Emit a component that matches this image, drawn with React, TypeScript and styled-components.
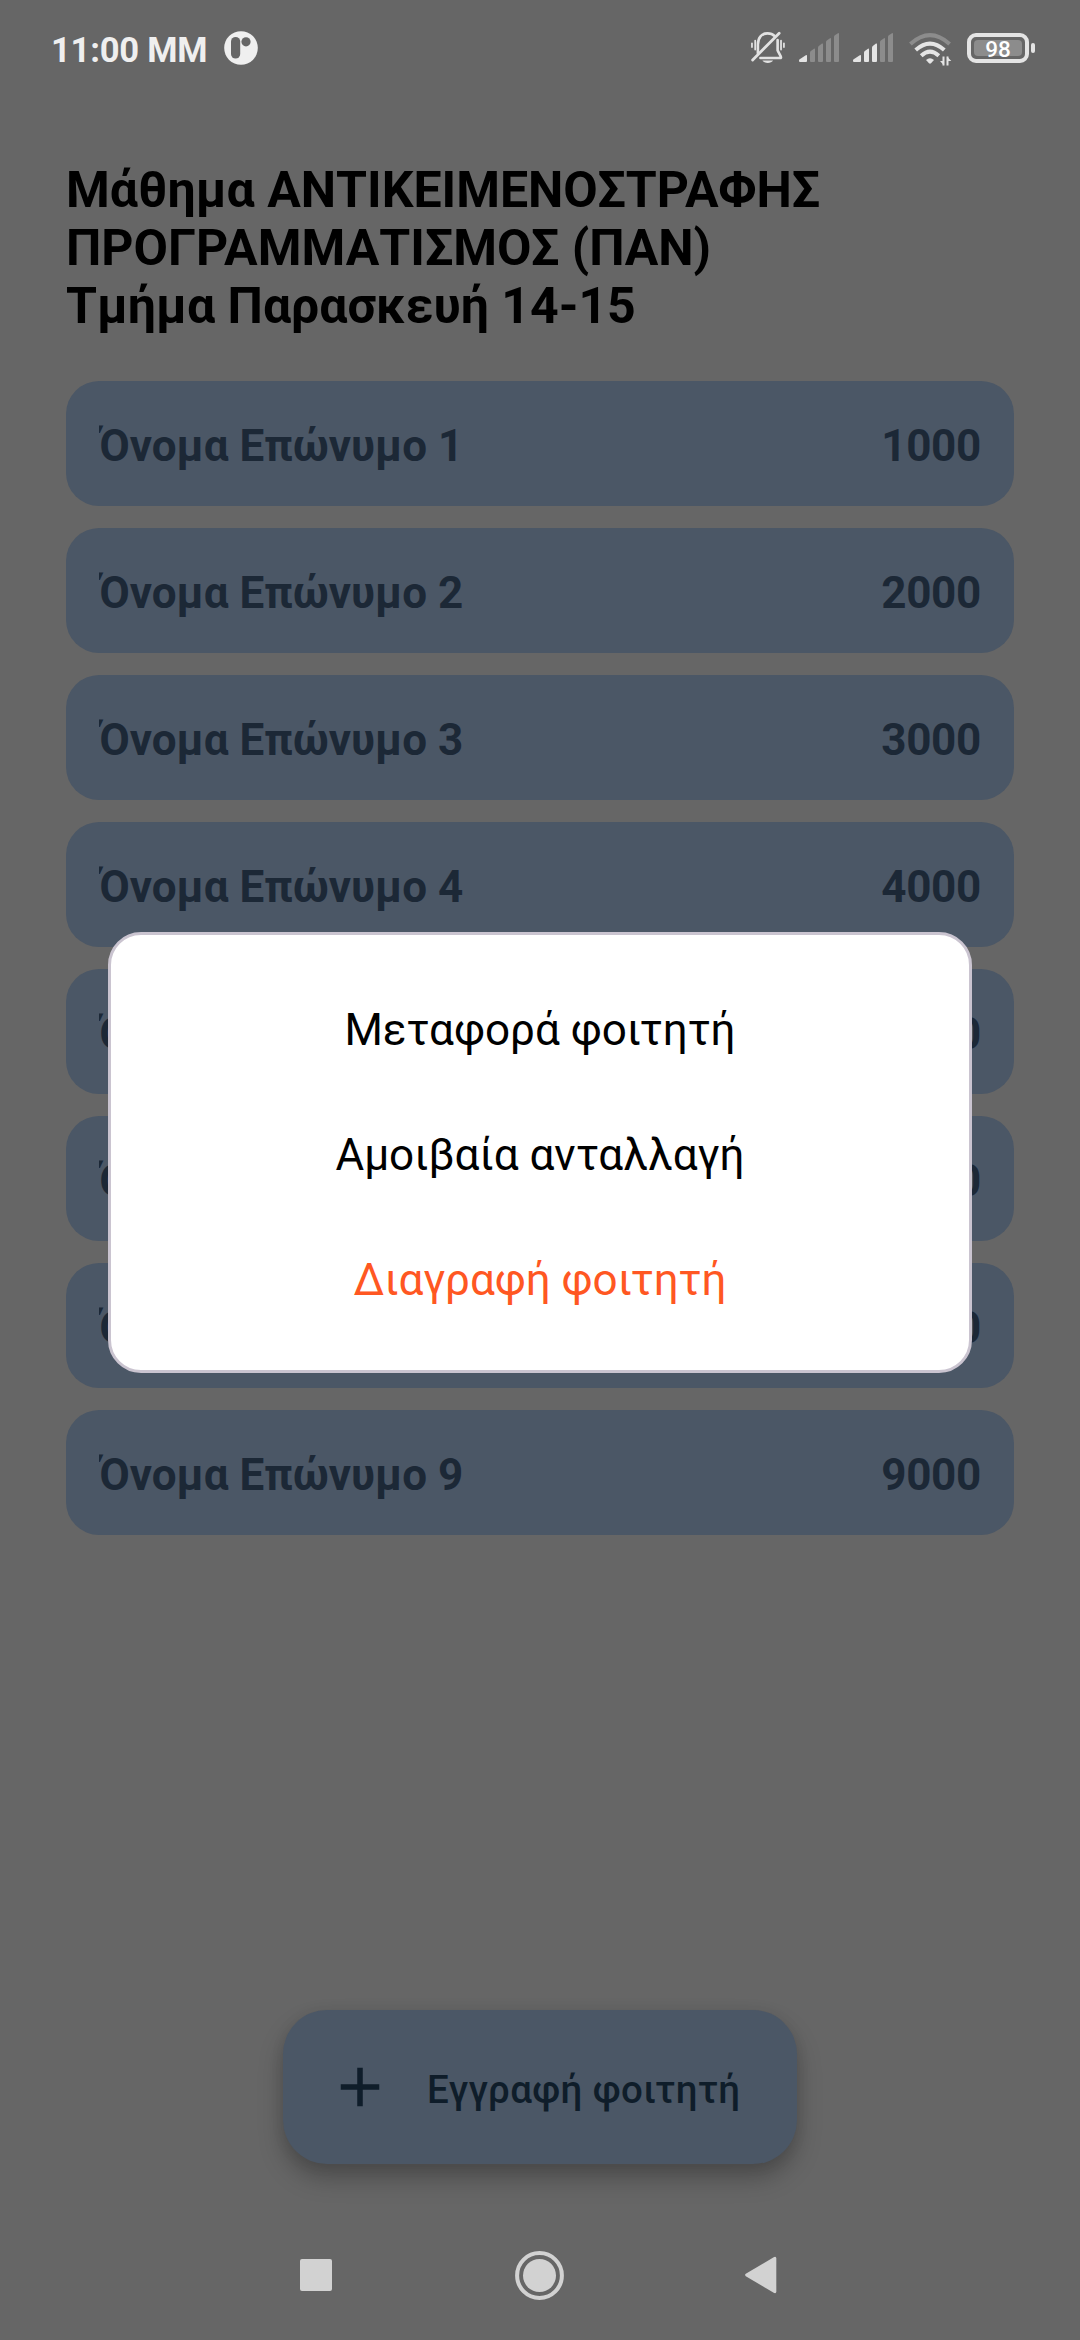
import React from "react";
import styled, { createGlobalStyle } from "styled-components";

const GlobalStyle = createGlobalStyle`
  *, *::before, *::after { box-sizing: border-box; }
  body { margin: 0; background: #666666; font-family: Roboto, "Noto Sans", sans-serif; }
`;

const Screen = styled.div`
  position: relative;
  display: flex;
  flex-direction: column;
  width: 1080px;
  height: 2340px;
  background: #666666;
  overflow: hidden;
`;

const StatusBar = styled.header`
  display: flex;
  align-items: center;
  justify-content: space-between;
  height: 96px;
  padding: 0 45px 0 51px;
`;

const StatusGroup = styled.div<{ $gap: number }>`
  display: flex;
  align-items: center;
  gap: ${(p) => p.$gap}px;
`;

const Clock = styled.span`
  padding-top: 3px;
  font-size: 34.6px;
  font-weight: 700;
  line-height: 42px;
  color: #efefef;
  letter-spacing: -0.25px;
  white-space: nowrap;
`;

const Glyph = styled.svg`
  display: block;
  flex: none;
`;

const Content = styled.main`
  display: flex;
  flex: 1;
  flex-direction: column;
  padding: 65px 66px 0;
`;

const Title = styled.h1`
  margin: 0 0 46px;
  font-size: 50px;
  font-weight: 700;
  line-height: 58px;
  color: #000;
  white-space: nowrap;
`;

const StudentList = styled.ul`
  display: flex;
  flex-direction: column;
  gap: 22px;
  margin: 0;
  padding: 0;
  list-style: none;
`;

const StudentRow = styled.li`
  display: flex;
  align-items: center;
  justify-content: space-between;
  height: 125px;
  padding: 4px 33px 0;
  border-radius: 33px;
  background: #4b5766;
  color: #1c2836;
  font-size: 44px;
  font-weight: 700;
  line-height: 66px;
`;

const StudentName = styled.span`
  overflow: hidden;
  white-space: nowrap;
`;

const StudentCode = styled.span`
  letter-spacing: -0.3px;
  white-space: nowrap;
`;

const BottomArea = styled.div`
  display: flex;
  justify-content: center;
  height: 200px;
`;

const EnrollButton = styled.button`
  display: flex;
  align-items: center;
  gap: 34px;
  width: 514px;
  height: 154px;
  padding: 0 0 0 44px;
  border: 0;
  border-radius: 44px;
  background: #4b5766;
  color: #0f1d2a;
  font: 500 38.5px/55px Roboto, "Noto Sans", sans-serif;
  box-shadow: 0 14px 24px rgba(0, 0, 0, 0.26), 0 2px 14px rgba(0, 0, 0, 0.07);
  white-space: nowrap;
`;

const ButtonLabel = styled.span`
  padding-top: 4px;
  letter-spacing: 0.38px;
`;

const NavBar = styled.nav`
  display: flex;
  align-items: center;
  justify-content: center;
  gap: 183px;
  height: 130px;
  padding-right: 3px;
`;

const Dialog = styled.section`
  position: absolute;
  top: 932px;
  left: 108px;
  display: flex;
  flex-direction: column;
  width: 864px;
  height: 441px;
  padding: 30px;
  border: 3px solid #cac4d0;
  border-radius: 33px;
  background: #fff;
`;

const DialogAction = styled.button<{ $danger?: boolean }>`
  display: flex;
  align-items: center;
  justify-content: center;
  height: 125px;
  padding: 4px 0 0;
  border: 0;
  background: none;
  color: ${(p) => (p.$danger ? "#ff5722" : "#000")};
  font: 400 44px/66px Roboto, "Noto Sans", sans-serif;
  white-space: nowrap;
`;

const students = [1, 2, 3, 4, 5, 6, 7, 9];

const AppBadge = () => (
  <Glyph width="34" height="34" viewBox="0 0 34 34">
    <circle cx="17" cy="17" r="16.8" fill="#efefef" />
    <rect x="7" y="6" width="9.2" height="21.6" rx="4.6" fill="#666" />
    <circle cx="22" cy="10.8" r="4.6" fill="#666" />
  </Glyph>
);

const MutedBell = () => (
  <Glyph width="34" height="34" viewBox="0.500 0 35 34" preserveAspectRatio="none" fill="none" stroke="#e2e2e2" strokeLinecap="round">
    <path d="M7.600 22.200V13.500C7.600 6.600 11.500 2.300 17.500 2.300c3.100 0 5.600 1 7.300 2.700M27.900 9.200V19.500l3.300 6.200q.6 1.300-.8 1.300H10.200" strokeWidth="2.700" />
    <path d="M29.500 2.200 2.200 29" strokeWidth="2.900" />
    <path d="M4.800 9.600v9M1.500 12.300v3.700M31.400 9.600v9M34.400 12.300v3.700" strokeWidth="1.800" />
    <path d="M12.300 29.500h10.900c-1.500 3.300-9.400 3.300-10.900 0Z" fill="#e2e2e2" stroke="none" />
  </Glyph>
);

const bars = [
  "M0 27.500Q0 26.800 .7 26.300L6.800 22.200Q8 21.600 8 22.800V28q0 1-1 1H1Q0 29 0 28Z",
  "M11 19.700q0-1 .8-1.600l3.200-2.300q1-.6 1 .6V28q0 1-1 1h-3q-1 0-1-1Z",
  "M19 14.500q0-1 .8-1.600l3.200-2.300q1-.6 1 .6V28q0 1-1 1h-3q-1 0-1-1Z",
  "M27 9.200q0-1 .8-1.600l3.200-2.300q1-.6 1 .6V28q0 1-1 1h-3q-1 0-1-1Z",
  "M35 3.900q0-1 .8-1.600L39 .3q1-.6 1 .6V28q0 1-1 1h-3q-1 0-1-1Z",
];

const Signal = ({ level }: { level: number }) => (
  <Glyph width="40" height="30" viewBox="0 0 40 30">
    {bars.map((d, i) => (
      <path key={d} d={d} fill={i < level ? "#e4e4e4" : "#8c8c8c"} />
    ))}
  </Glyph>
);

const Wifi = () => (
  <Glyph width="46" height="36" viewBox="-2 -3 46 36" fill="none" strokeWidth="4">
    <path d="M1.400 11Q21 -6.800 40.600 11" stroke="#8c8c8c" />
    <path d="M6.700 17Q21 4.200 35.300 17" stroke="#e4e4e4" />
    <path d="M12.200 22.700Q21 14.600 29.800 22.700" stroke="#e4e4e4" />
    <path d="M17 27Q21 23.500 25 27L22 30.300q-1 .9-2 0Z" fill="#e4e4e4" />
    <path d="M34.500 32.500V23.500M38.500 23.500v9" stroke="#e4e4e4" strokeWidth="2" />
    <path d="M31 28h4v4.500ZM38 23.500l4.300 4.500H38Z" fill="#e4e4e4" />
  </Glyph>
);

const Battery = styled.div`
  display: flex;
  align-items: center;
  gap: 2px;
`;

const BatteryCase = styled.div`
  width: 62px;
  height: 30px;
  padding: 3px;
  border: 4px solid #e4e4e4;
  border-radius: 9px;
`;

const BatteryLevel = styled.div`
  display: flex;
  align-items: center;
  justify-content: center;
  height: 16px;
  padding-top: 2px;
  border-radius: 4px;
  background: #8c8c8c;
  color: #fff;
  font-size: 22.5px;
  font-weight: 500;
  line-height: 16px;
`;

const BatteryTip = styled.div`
  width: 4px;
  height: 10px;
  border-radius: 2px;
  background: #e4e4e4;
`;

const PlusIcon = () => (
  <Glyph width="66" height="66" viewBox="0 0 24 24" fill="currentColor">
    <path d="M19 13h-6v6h-2v-6H5v-2h6V5h2v6h6v2z" />
  </Glyph>
);

const RecentIcon = () => (
  <Glyph width="32" height="32" viewBox="0 0 32 32">
    <rect width="32" height="32" rx="2" fill="#d2d2d2" />
  </Glyph>
);

const HomeIcon = () => (
  <Glyph width="49" height="49" viewBox="0 0 49 49" fill="#d2d2d2">
    <circle cx="24.5" cy="24.5" r="22.4" fill="none" stroke="#d2d2d2" strokeWidth="4" />
    <circle cx="24.5" cy="24.5" r="16.5" />
  </Glyph>
);

const BackGlyph = styled(Glyph)`
  margin-left: -2px;
`;

const BackIcon = () => (
  <BackGlyph width="32" height="38" viewBox="0 0 32 38" fill="#d2d2d2">
    <path d="M.8 17.800 28.700 1.200Q31.300 0 31.300 2.600V35.400Q31.300 38 28.700 36.800L.8 20.200Q-.6 19 .8 17.800Z" />
  </BackGlyph>
);

export default function App() {
  return (
    <>
      <GlobalStyle />
      <Screen>
        <StatusBar>
          <StatusGroup $gap={17}>
            <Clock>11:00 MM</Clock>
            <AppBadge />
          </StatusGroup>
          <StatusGroup $gap={14}>
            <MutedBell />
            <Signal level={1} />
            <Signal level={3} />
            <Wifi />
            <Battery>
              <BatteryCase>
                <BatteryLevel>98</BatteryLevel>
              </BatteryCase>
              <BatteryTip />
            </Battery>
          </StatusGroup>
        </StatusBar>
        <Content>
          <Title>
            Μάθημα ΑΝΤΙΚΕΙΜΕΝΟΣΤΡΑΦΗΣ
            <br />
            ΠΡΟΓΡΑΜΜΑΤΙΣΜΟΣ (ΠΑΝ)
            <br />
            Τμήμα Παρασκευή 14-15
          </Title>
          <StudentList>
            {students.map((n) => (
              <StudentRow key={n}>
                <StudentName>Όνομα Επώνυμο {n}</StudentName>
                <StudentCode>{n * 1000}</StudentCode>
              </StudentRow>
            ))}
          </StudentList>
        </Content>
        <BottomArea>
          <EnrollButton>
            <PlusIcon />
            <ButtonLabel>Εγγραφή φοιτητή</ButtonLabel>
          </EnrollButton>
        </BottomArea>
        <NavBar>
          <RecentIcon />
          <HomeIcon />
          <BackIcon />
        </NavBar>
        <Dialog role="dialog">
          <DialogAction>Μεταφορά φοιτητή</DialogAction>
          <DialogAction>Αμοιβαία ανταλλαγή</DialogAction>
          <DialogAction $danger>Διαγραφή φοιτητή</DialogAction>
        </Dialog>
      </Screen>
    </>
  );
}
